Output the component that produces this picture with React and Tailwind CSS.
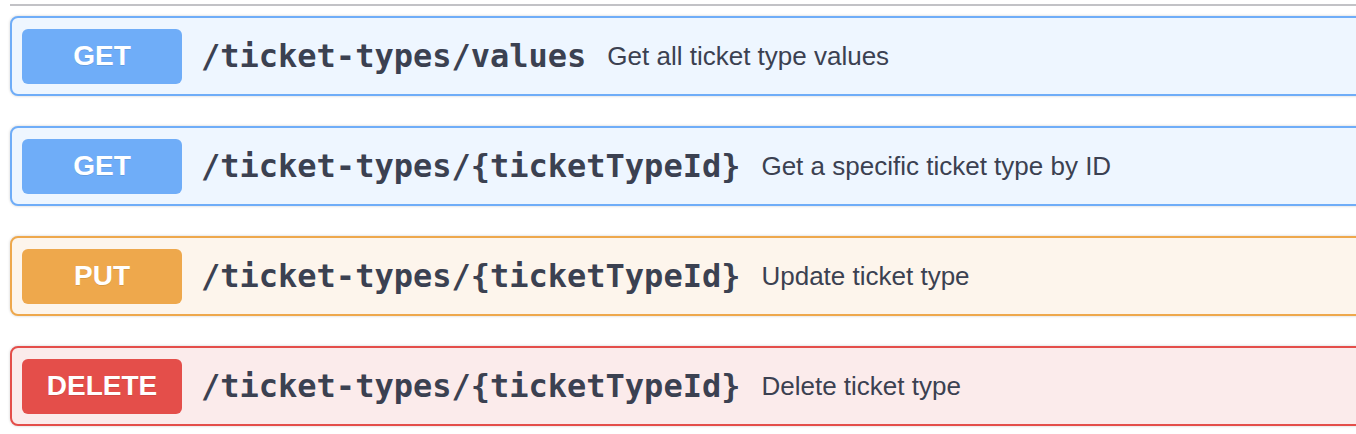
import React from 'react';

const OPS = [
  { method: 'GET', path: '/ticket-types/values', summary: 'Get all ticket type values', tone: 'get' },
  { method: 'GET', path: '/ticket-types/{ticketTypeId}', summary: 'Get a specific ticket type by ID', tone: 'get' },
  { method: 'PUT', path: '/ticket-types/{ticketTypeId}', summary: 'Update ticket type', tone: 'put' },
  { method: 'DELETE', path: '/ticket-types/{ticketTypeId}', summary: 'Delete ticket type', tone: 'delete' },
];

const TONES = {
  get: { card: 'border-[#6fadf8] bg-[#eef6ff]', badge: 'bg-[#6fadf8]' },
  put: { card: 'border-[#eea84c] bg-[#fdf5ec]', badge: 'bg-[#eea84c]' },
  delete: { card: 'border-[#e44e4a] bg-[#fbebeb]', badge: 'bg-[#e44e4a]' },
};

function OperationRow({ op }) {
  const tone = TONES[op.tone];
  return (
    <div
      className={`flex items-center h-[80px] border-2 rounded-[8px] mr-[-20px] pl-[10px] shadow-[0_0_3px_rgba(0,0,0,0.19)] ${tone.card}`}
    >
      <span
        className={`flex items-center justify-center w-[160px] h-[55px] rounded-[6px] text-white text-[28px] font-bold [text-shadow:0_1px_0_rgba(0,0,0,0.1)] font-['Liberation_Sans',Arial,sans-serif] ${tone.badge}`}
      >
        {op.method}
      </span>
      <span className="ml-[19px] text-[32px] font-bold text-[#3b4151] font-['DejaVu_Sans_Mono',monospace] leading-none">
        {op.path}
      </span>
      <span className="ml-[21px] text-[26px] text-[#3b4151] font-['Liberation_Sans',Arial,sans-serif]">
        {op.summary}
      </span>
    </div>
  );
}

export default function App() {
  return (
    <div className="w-[1356px] h-[434px] overflow-hidden bg-white pt-[4px] px-[10px]">
      <div className="h-[2px] bg-[#c2c2c6] mr-[-10px]" />
      <div className="flex flex-col gap-[30px] mt-[10px]">
        {OPS.map((op, i) => (
          <OperationRow key={i} op={op} />
        ))}
      </div>
    </div>
  );
}
